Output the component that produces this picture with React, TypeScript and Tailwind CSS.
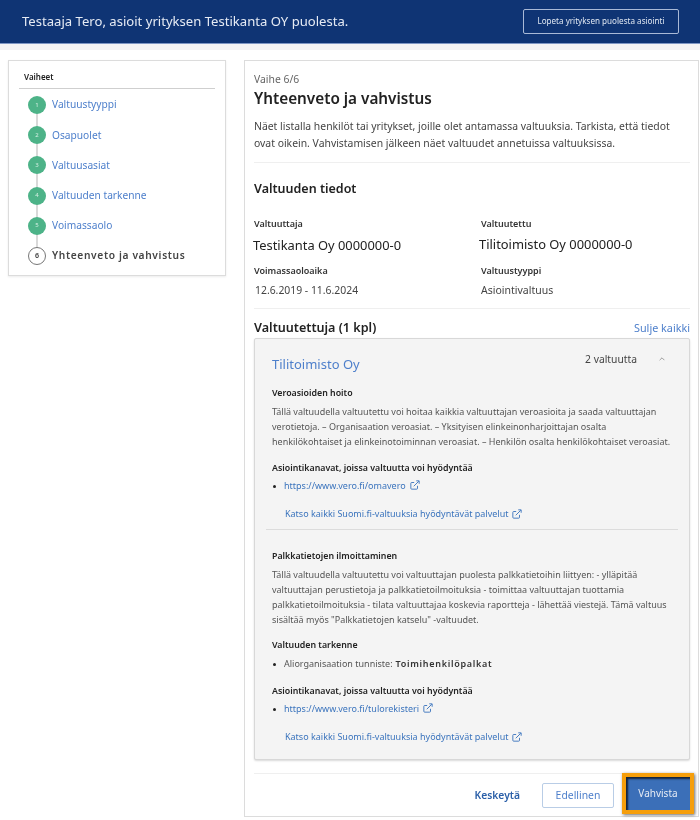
const FONT = "font-['Noto_Sans',sans-serif]";

const steps = ['Valtuustyyppi', 'Osapuolet', 'Valtuusasiat', 'Valtuuden tarkenne', 'Voimassaolo'];

function ExternalIcon() {
  return (
    <svg viewBox="0 0 12 12" fill="none" stroke="currentColor" strokeWidth="1.1" className="inline-block w-[10px] h-[10px] ml-1 -mt-[2px]">
      <path d="M9 7v3a1 1 0 0 1-1 1H2a1 1 0 0 1-1-1V4a1 1 0 0 1 1-1h3" />
      <path d="M4.5 7.5 10.5 1.5M7.5 1h3.5v3.5" />
    </svg>
  );
}

function Label({ children }: { children: React.ReactNode }) {
  return <div className="text-[9px] leading-[12px] font-semibold text-[#333]">{children}</div>;
}

function SubHeading({ children }: { children: React.ReactNode }) {
  return <div className="text-[8.8px] leading-[12px] font-semibold text-[#222]">{children}</div>;
}

function Channels({ url }: { url: string }) {
  return (
    <>
      <SubHeading>Asiointikanavat, joissa valtuutta voi hyödyntää</SubHeading>
      <ul className="mt-[6px] text-[9px] leading-[12px] text-[#3b74bd]">
        <li className="flex items-center">
          <span className="w-[3px] h-[3px] rounded-full bg-[#222] ml-[1px] mr-[8px]" />
          {url}
          <ExternalIcon />
        </li>
      </ul>
      <div className="mt-[16px] ml-[13px] text-[9px] leading-[12px] text-[#3b74bd]">
        Katso kaikki Suomi.fi-valtuuksia hyödyntävät palvelut
        <ExternalIcon />
      </div>
    </>
  );
}

export default function App() {
  return (
    <div className={`${FONT} w-[700px] h-[820px] overflow-hidden bg-white blur-[0.4px]`}>
      <header className="h-[44px] bg-[#0f3474] border-b border-[#7f97c4] flex items-center justify-between pl-[22px] pr-[21px]">
        <span className="text-[13.1px] text-[#e6ebf4]">Testaaja Tero, asioit yrityksen Testikanta OY puolesta.</span>
        <button className="w-[156px] h-[25px] border border-[#a9b9d6] rounded-[2px] text-[8.1px] text-[#dfe6f1]">
          Lopeta yrityksen puolesta asiointi
        </button>
      </header>
      <div className="h-[6px] bg-[#f4f4f4]" />

      <div className="flex items-start pt-[10px] pl-[8px]">
        <aside className="w-[218px] h-[216px] bg-white border border-[#dcdcdc] shadow-[0_1px_2px_rgba(0,0,0,0.08)] px-[10px] pt-[10px] shrink-0">
          <div className="text-[8px] leading-[12px] font-semibold text-[#222] pl-[5px] pb-[5px] border-b border-[#cfcfcf]">Vaiheet</div>
          <ol className="relative mt-[7px] pl-[9px]">
            <span className="absolute left-[17px] top-[10px] bottom-[10px] w-[2px] bg-[#d9d9d9]" />
            {steps.map((s, i) => (
              <li key={s} className="relative flex items-center h-[18px] mb-[12.2px]">
                <span className="w-[18px] h-[18px] rounded-full bg-[#4db388] text-[#d5efe3] text-[6px] flex items-center justify-center">{i + 1}</span>
                <span className="ml-[6px] text-[10.2px] text-[#4d7fcb]">{s}</span>
              </li>
            ))}
            <li className="relative flex items-center h-[18px]">
              <span className="w-[18px] h-[18px] rounded-full bg-white border border-[#777] text-[#333] text-[7px] font-semibold flex items-center justify-center">6</span>
              <span className="ml-[6px] text-[10.2px] font-semibold tracking-[0.65px] text-[#444]">Yhteenveto ja vahvistus</span>
            </li>
          </ol>
        </aside>

        <main className="ml-[18px] w-[455px] h-[757px] bg-white border border-[#dcdcdc] pl-[9px] pr-[8px] pt-[11px] shrink-0">
          <div className="text-[10.4px] leading-[14px] text-[#666]">Vaihe 6/6</div>
          <h1 className="mt-[2px] text-[15.3px] leading-[20px] font-semibold text-[#222]">Yhteenveto ja vahvistus</h1>
          <p className="mt-[10px] text-[10.4px] leading-[17px] text-[#444] pb-[10px] border-b border-[#efefef] whitespace-nowrap">
            Näet listalla henkilöt tai yritykset, joille olet antamassa valtuuksia. Tarkista, että tiedot<br />
            ovat oikein. Vahvistamisen jälkeen näet valtuudet annetuissa valtuuksissa.
          </p>

          <h2 className="mt-[17px] text-[12.5px] leading-[18px] font-semibold text-[#222]">Valtuuden tiedot</h2>
          <div className="mt-[20px] grid grid-cols-[227px_1fr]">
            <div>
              <Label>Valtuuttaja</Label>
              <div className="mt-[6px] -ml-[1px] text-[12.9px] leading-[18px] text-[#222]">Testikanta Oy 0000000-0</div>
            </div>
            <div>
              <Label>Valtuutettu</Label>
              <div className="mt-[5px] -ml-[2px] text-[12.9px] leading-[18px] text-[#222]">Tilitoimisto Oy 0000000-0</div>
            </div>
            <div className="mt-[11px]">
              <Label>Voimassaoloaika</Label>
              <div className="mt-[6px] ml-[1px] text-[10.4px] leading-[14px] text-[#444]">12.6.2019 - 11.6.2024</div>
            </div>
            <div className="mt-[11px]">
              <Label>Valtuustyyppi</Label>
              <div className="mt-[6px] text-[10.5px] leading-[14px] text-[#444]">Asiointivaltuus</div>
            </div>
          </div>

          <div className="mt-[11px] border-t border-[#efefef] pt-[10px] flex items-center justify-between">
            <h2 className="text-[12.6px] leading-[18px] font-semibold text-[#222]">Valtuutettuja (1 kpl)</h2>
            <a className="text-[10.8px] text-[#4d7fcb]">Sulje kaikki</a>
          </div>

          <section className="mt-[1px] h-[422px] bg-[#f4f4f4] border border-[#d8d8d8] rounded-[2px] shadow-[0_1px_2px_rgba(0,0,0,0.15)] pl-[17px] pr-[17px] pt-[15px]">
            <div className="flex items-start justify-between">
              <span className="text-[13px] leading-[20px] text-[#4d7fcb]">Tilitoimisto Oy</span>
              <div className="-mt-[3px] flex items-center text-[10.3px] leading-[16px] text-[#444]">
                2 valtuutta
                <svg viewBox="0 0 10 6" fill="none" stroke="#666" strokeWidth="1" className="ml-[22px] mr-[7px] w-[6px] h-[4px]">
                  <path d="M1 5 5 1l4 4" />
                </svg>
              </div>
            </div>

            <div className="mt-[13px]">
              <SubHeading>Veroasioiden hoito</SubHeading>
              <p className="mt-[5px] text-[9px] leading-[15px] text-[#555] whitespace-nowrap">
                Tällä valtuudella valtuutettu voi hoitaa kaikkia valtuuttajan veroasioita ja saada valtuuttajan<br />
                verotietoja. – Organisaation veroasiat. – Yksityisen elinkeinonharjoittajan osalta<br />
                henkilökohtaiset ja elinkeinotoiminnan veroasiat. – Henkilön osalta henkilökohtaiset veroasiat.
              </p>
              <div className="mt-[13px]">
                <Channels url="https://www.vero.fi/omavero" />
              </div>
            </div>

            <div className="mt-[9px] -mx-[6px] border-t border-[#dcdcdc]" />

            <div className="mt-[20px]">
              <SubHeading>Palkkatietojen ilmoittaminen</SubHeading>
              <p className="mt-[5px] text-[9px] leading-[15px] text-[#555] whitespace-nowrap">
                Tällä valtuudella valtuutettu voi valtuuttajan puolesta palkkatietoihin liittyen: - ylläpitää<br />
                valtuuttajan perustietoja ja palkkatietoilmoituksia - toimittaa valtuuttajan tuottamia<br />
                palkkatietoilmoituksia - tilata valtuuttajaa koskevia raportteja - lähettää viestejä. Tämä valtuus<br />
                sisältää myös "Palkkatietojen katselu" -valtuudet.
              </p>
              <div className="mt-[12px]">
                <SubHeading>Valtuuden tarkenne</SubHeading>
              </div>
              <div className="mt-[7px] flex items-center text-[9px] leading-[12px] text-[#555]">
                <span className="w-[3px] h-[3px] rounded-full bg-[#222] ml-[1px] mr-[8px]" />
                Aliorganisaation tunniste:
                <b className="ml-[3px] font-semibold tracking-[0.7px] text-[#333]">Toimihenkilöpalkat</b>
              </div>
              <div className="mt-[15px]">
                <Channels url="https://www.vero.fi/tulorekisteri" />
              </div>
            </div>
          </section>

          <footer className="mt-[13px] border-t border-[#efefef] flex items-start justify-end">
            <div className="mt-[9px] h-[25px] flex items-center">
              <a className="text-[10.3px] font-semibold text-[#2a5fa8] mr-[22px]">Keskeytä</a>
              <button className="w-[72px] h-[25px] border border-[#b9cde6] rounded-[2px] bg-white text-[10.4px] text-[#4d7fcb]">Edellinen</button>
            </div>
            <div className="ml-[8px] -mr-[4px] -mt-[1px] border-[4px] border-[#f59e0b] shadow-[1px_1px_3px_rgba(0,0,0,0.6)]">
              <button className="block w-[64px] h-[33px] bg-[#3b6fb8] text-[10px] text-[#e6ebf4] shadow-[inset_2px_2px_2px_rgba(0,0,0,0.7)]">Vahvista</button>
            </div>
          </footer>
        </main>
      </div>
    </div>
  );
}
